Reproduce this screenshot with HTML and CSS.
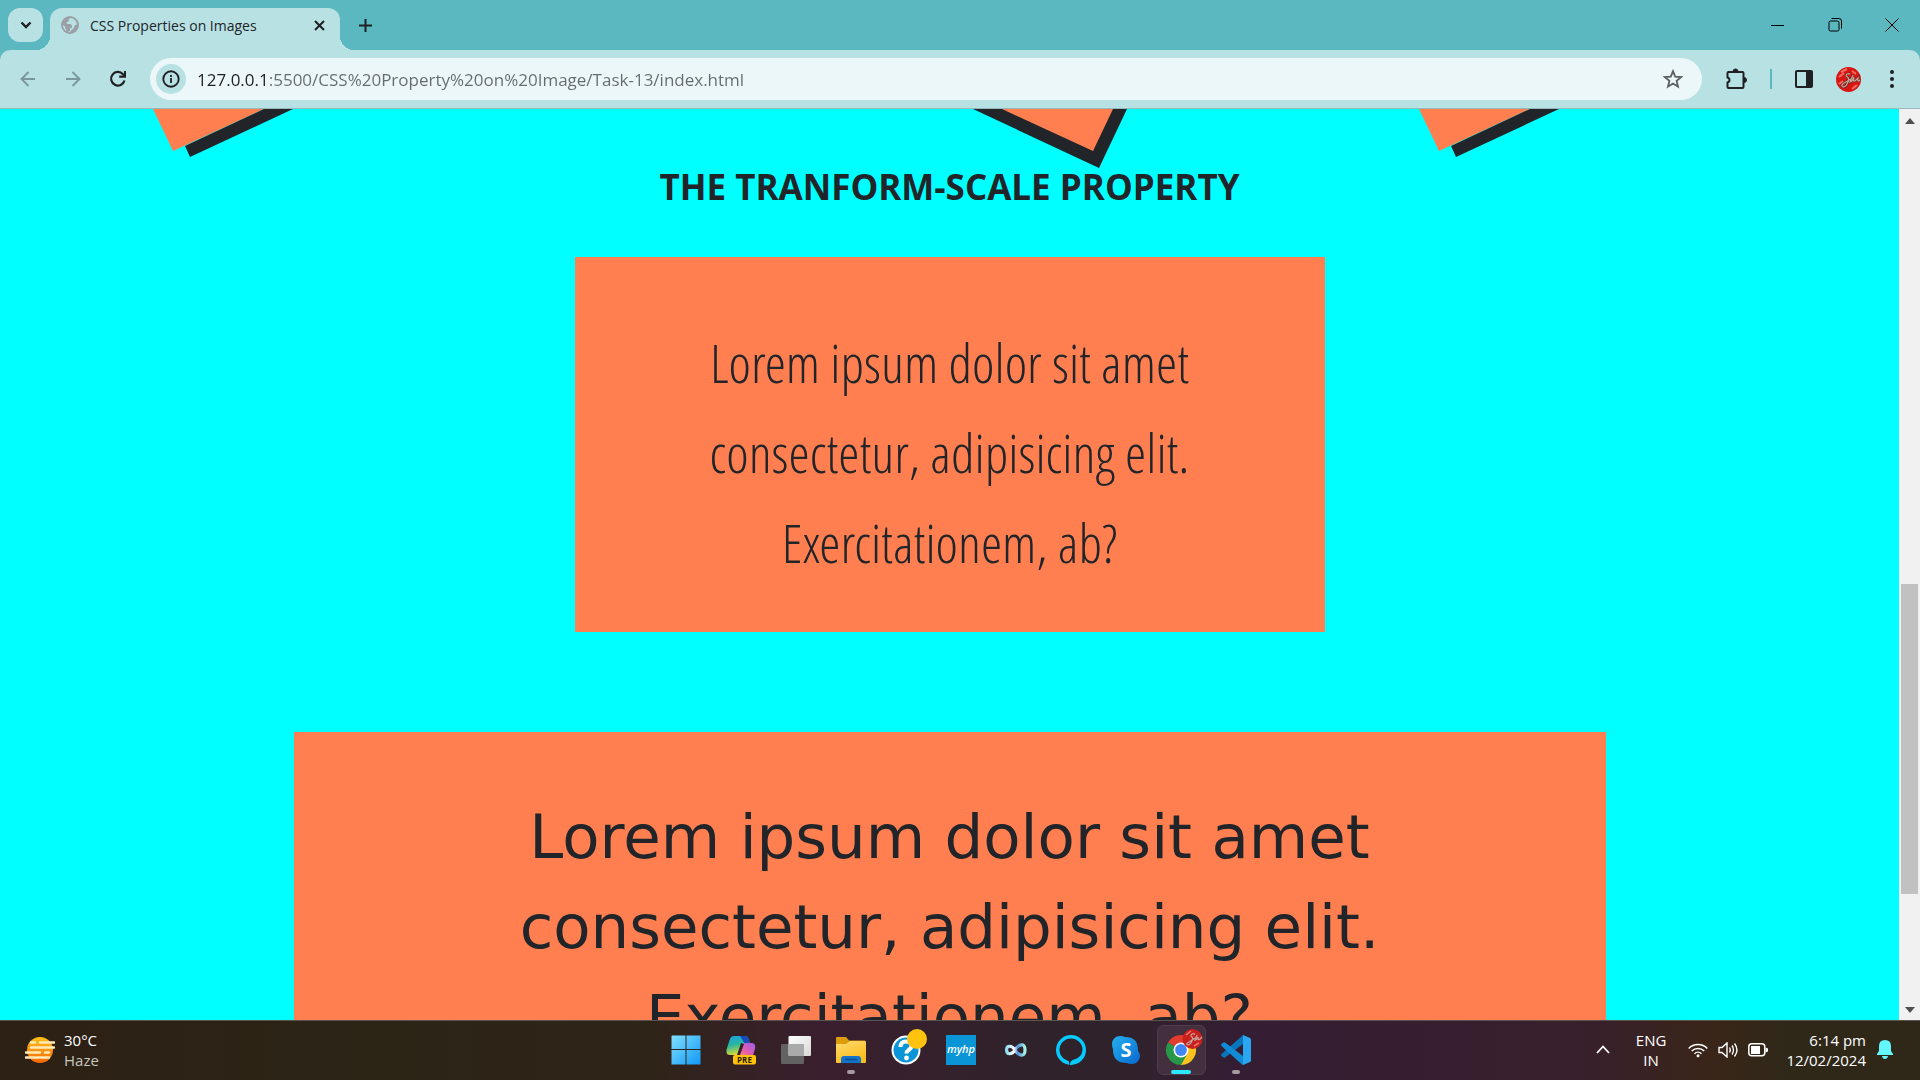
FILE: index.html
```html
<!DOCTYPE html>
<html lang="en">
<head>
<meta charset="utf-8">
<title>CSS Properties on Images</title>
<link rel="stylesheet" href="styles.css">
</head>
<body>
<header class="browser">
  <div class="tabstrip">
    <button class="tab-search" aria-label="Search tabs"><svg width="12" height="8" viewBox="0 0 12 8"><path d="M1.500 1.500 6 6l4.500-4.500" fill="none" stroke="#1f2023" stroke-width="2.400"/></svg></button>
    <div class="tab">
      <svg class="globe" width="18" height="18" viewBox="0 0 18 18"><circle cx="9" cy="9" r="9" fill="#9aa0a6"/><path d="M9.500 2 7.500 3.500 8 5 5.500 6.500 6 8h3.500l1.500 1.500v2l-2 1V15l-2.500.8L4.500 13 4 10.500 2 9c0 4 3 7 7 7l2-2.500 2-1.500 .5-2.500 2.500-1C15.500 5 13 2 9.500 2z" fill="#b8e1e4"/></svg>
      <span class="tab-title">CSS Properties on Images</span>
      <button class="tab-close" aria-label="Close tab"><svg width="11" height="11" viewBox="0 0 11 11"><path d="m1 1 9 9m0-9-9 9" stroke="#1f2023" stroke-width="2"/></svg></button>
    </div>
    <button class="new-tab" aria-label="New tab"><svg width="13" height="13" viewBox="0 0 13 13"><path d="M6.500 0v13M0 6.500h13" stroke="#1f2023" stroke-width="2"/></svg></button>
    <div class="window-buttons">
      <button aria-label="Minimize"><svg width="13" height="13" viewBox="0 0 13 13"><path d="M0 6.500h13" stroke="#000"/></svg></button>
      <button aria-label="Restore"><svg width="14" height="14" viewBox="0 0 14 14" fill="none" stroke="#000"><rect x="1" y="3" width="10" height="10" rx="1.500"/><path d="M3.500.5H11A2.500 2.500 0 0 1 13.500 3v7.500"/></svg></button>
      <button aria-label="Close"><svg width="14" height="14" viewBox="0 0 14 14"><path d="m.5.5 13 13m0-13-13 13" stroke="#000"/></svg></button>
    </div>
  </div>
  <div class="toolbar">
    <button class="nav" aria-label="Back"><svg width="16" height="16" viewBox="0 0 16 16"><path d="M15 8H2m6.500-7-7 7 7 7" fill="none" stroke="#7b979b" stroke-width="1.900"/></svg></button>
    <button class="nav" aria-label="Forward"><svg width="16" height="16" viewBox="0 0 16 16"><path d="M1 8h13M7.500 1l7 7-7 7" fill="none" stroke="#7b979b" stroke-width="1.900"/></svg></button>
    <button class="nav" aria-label="Reload"><svg width="18" height="18" viewBox="0 0 18 18"><path d="M15.500 10.500A6.800 6.800 0 1 1 14 4.200l1.500 1.500" fill="none" stroke="#1f2023" stroke-width="2.200"/><path d="M17 1v6.800h-6.800V5.600H15V1z" fill="#1f2023"/></svg></button>
    <div class="omnibox">
      <button class="site-info" aria-label="View site information"><svg width="18" height="18" viewBox="0 0 18 18"><circle cx="9" cy="9" r="7.700" fill="none" stroke="#1f2023" stroke-width="1.900"/><path d="M9 8v5M9 5v2" stroke="#1f2023" stroke-width="1.800"/></svg></button>
      <input class="address" type="text" aria-label="Address" value="127.0.0.1:5500/CSS%20Property%20on%20Image/Task-13/index.html">
      <button class="star" aria-label="Bookmark this tab"><svg width="20" height="20" viewBox="0 0 20 20"><path d="m10 2.200 2.200 5.400 5.900.5-4.500 3.800 1.400 5.800-5-3.100-5 3.100 1.400-5.800-4.500-3.800 5.900-.5z" fill="none" stroke="#5a5f61" stroke-width="1.800"/></svg></button>
    </div>
    <div class="actions">
      <button aria-label="Extensions"><svg width="22" height="22" viewBox="0 0 22 22"><path d="M3.500 4h14a1 1 0 0 1 1 1v14a1 1 0 0 1-1 1h-14a1 1 0 0 1-1-1v-4.500q2-.5 2-2.500t-2-2.500V5a1 1 0 0 1 1-1z" fill="none" stroke="#1f2023" stroke-width="2"/><path d="M8 3.500a2.500 2.500 0 0 1 5 0zM19 9.500a2.500 2.500 0 0 1 0 5z" fill="#1f2023" stroke="#1f2023"/></svg></button>
      <span class="divider"></span>
      <button aria-label="Side panel"><svg width="18" height="18" viewBox="0 0 18 18"><rect x="1" y="1" width="16" height="16" rx="1" fill="none" stroke="#1f2023" stroke-width="2"/><path d="M11 1h6v16h-6z" fill="#1f2023"/></svg></button>
      <button aria-label="Profile"><svg width="25" height="25" viewBox="0 0 25 25"><circle cx="12.500" cy="12.500" r="12.500" fill="#d91513"/><path d="m5 5 6-3M3 10l5-4m8-2 4 3m-4 15 5-4M3 17l4-3" stroke="#f06d62" stroke-width="2"/><path d="M14 7q-4-1-4 2 4 2 2 6-2 5-5 5-3-1 1-4l7-4m2-4-3 7q3-1 4-5-1 5 1 4l3-3q-1 5 2 2" fill="none" stroke="#5c2420" stroke-width="2.400"/><path d="M14 7q-4-1-4 2 4 2 2 6-2 5-5 5-3-1 1-4l7-4m2-4-3 7q3-1 4-5-1 5 1 4l3-3q-1 5 2 2" fill="none" stroke="#c9a295" stroke-width="1.300"/></svg></button>
      <button class="menu" aria-label="Menu"><svg width="4" height="18" viewBox="0 0 4 18" fill="#1f2023"><circle cx="2" cy="2" r="2"/><circle cx="2" cy="9" r="2"/><circle cx="2" cy="16" r="2"/></svg></button>
    </div>
  </div>
</header>

<div class="viewport">
  <main class="page">
    <div class="rotated">
      <svg width="354" height="60" viewBox="0 0 354 60"><path d="M13 0 33 42 124 0z" fill="#ff7f50"/><path d="m124 0-79 37 5 11L153 0z" fill="#212529"/></svg>
      <svg width="354" height="60" viewBox="0 0 354 60"><path d="m200 0 126 59 28-59z" fill="#212529"/><path d="m229 0 91 42 20-42z" fill="#ff7f50"/></svg>
      <svg width="354" height="60" viewBox="0 0 354 60"><path d="M13 0 33 42 124 0z" fill="#ff7f50"/><path d="m124 0-79 37 5 11L153 0z" fill="#212529"/></svg>
    </div>
    <h1 class="heading">THE TRANFORM-SCALE PROPERTY</h1>
    <p class="card tall">Lorem ipsum dolor sit amet<br>consectetur, adipisicing elit.<br>Exercitationem, ab?</p>
    <p class="card wide">Lorem ipsum dolor sit amet<br>consectetur, adipisicing elit.<br>Exercitationem, ab?</p>
  </main>
  <div class="scrollbar" aria-hidden="true">
    <svg width="10" height="6" viewBox="0 0 10 6"><path d="m5 0 5 6H0z" fill="#505050"/></svg>
    <div class="track"><div class="thumb"></div></div>
    <svg width="10" height="6" viewBox="0 0 10 6"><path d="m5 6 5-6H0z" fill="#505050"/></svg>
  </div>
</div>

<footer class="taskbar">
  <button class="weather">
    <svg width="30" height="26" viewBox="0 0 30 26"><defs><linearGradient id="sun" x2="0" y2="1"><stop stop-color="#ffc21a"/><stop offset="1" stop-color="#f4660a"/></linearGradient></defs><circle cx="15" cy="13" r="13" fill="url(#sun)"/><path d="M6 5.500h4m5 0h14M6 10.500h23M1 15.500h14m5 0h4M1 20.500h23" stroke="#ffeab5" stroke-width="2.600" stroke-linecap="round"/></svg>
    <span class="stack"><span>30°C</span><span class="dim">Haze</span></span>
  </button>
  <nav class="apps">
    <button class="app" aria-label="Start"><svg width="30" height="30" viewBox="0 0 30 30"><defs><linearGradient id="win" x2="1" y2="1"><stop stop-color="#80e0ff"/><stop offset="1" stop-color="#1198f5"/></linearGradient></defs><path d="M1 .5h13.500V14H.5V1zM15.500.5h14V14h-14zM.5 15h14v14.500H.5zM15.500 15h14v14.500h-14z" fill="url(#win)"/></svg></button>
    <button class="app" aria-label="Copilot"><svg width="30" height="30" viewBox="0 0 30 30"><defs><linearGradient id="cpa" x2=".3" y2="1"><stop stop-color="#1c9fe8"/><stop offset=".5" stop-color="#27b6a0"/><stop offset="1" stop-color="#d8da36"/></linearGradient><linearGradient id="cpb" x1="1" x2="0" y2="1"><stop stop-color="#9a5cf0"/><stop offset=".6" stop-color="#ee5fa4"/><stop offset="1" stop-color="#ffae58"/></linearGradient></defs><path d="M8 1h11q3 0 4 4l1 4h-5q-3 0-4 3l-3 8H4q-5 0-3-7L4 4q1-3 4-3z" fill="url(#cpa)"/><path d="M14 1h5q3 0 4 4l1 4h-5z" fill="#1849bd"/><path d="M20 8h6q4 0 3 6l-2 6-4 3H11l4-11q1-4 5-4z" fill="url(#cpb)"/><path d="m15 8 3 1-4 11h-3z" fill="#33222a"/><rect x="7" y="20" width="23" height="9.500" rx="2" fill="#ffc20a"/><text x="18.500" y="27.500" text-anchor="middle" class="badge-text">PRE</text></svg></button>
    <button class="app" aria-label="Task view"><svg width="30" height="30" viewBox="0 0 30 30"><defs><linearGradient id="tv" x2="1" y2="1"><stop stop-color="#fff"/><stop offset="1" stop-color="#d8d8d8"/></linearGradient></defs><rect x="0" y="9" width="23" height="20" rx="1" fill="#626262"/><rect x="7.500" y="1" width="22.500" height="20" rx="1" fill="url(#tv)"/><path d="M7.500 9H23v12H8.500a1 1 0 0 1-1-1z" fill="#aaa"/></svg></button>
    <button class="app open" aria-label="File Explorer"><svg width="30" height="30" viewBox="0 0 30 30"><defs><linearGradient id="fold" x2=".5" y2="1"><stop stop-color="#ffdb70"/><stop offset="1" stop-color="#f9bd1c"/></linearGradient></defs><path d="M0 10V3q0-1 1-1h9l3 3.500h16L28 10z" fill="#dd9c0b"/><path d="M0 9h10l4-3h15q1 0 1 1v20q0 1-1 1H1q-1 0-1-1z" fill="url(#fold)"/><path d="M5 28v-4q0-3 3-3h14q3 0 3 3v4z" fill="#1273c8"/><path d="M9 24.500h12" stroke="#0c4c91" stroke-width="1.500"/></svg></button>
    <button class="app" aria-label="HP Support Assistant"><svg width="44" height="42" viewBox="-10 0 44 42"><circle cx="12" cy="21" r="14.500" fill="#fff"/><circle cx="12" cy="21" r="12.500" fill="#0a96d6"/><path d="M6.500 18q0-5.500 5.500-5.500t5.500 4.500c0 4-5 3.500-5 7.500" fill="none" stroke="#fff" stroke-width="4"/><circle cx="12.500" cy="29" r="2.400" fill="#fff"/><circle cx="23" cy="10" r="10" fill="#ffc20e"/></svg></button>
    <button class="app" aria-label="myHP"><span class="myhp">myhp</span></button>
    <button class="app" aria-label="Infinity"><svg width="24" height="18" viewBox="0 0 24 18"><defs><linearGradient id="inf"><stop stop-color="#90d9ee"/><stop offset=".4" stop-color="#fff"/><stop offset=".6" stop-color="#4d91dc"/><stop offset="1" stop-color="#a9f4e4"/></linearGradient></defs><path d="M11 9C8 14 2.500 14 2.500 9S8 4 11 9s10 8.500 10 0S14 4 11 9z" fill="none" stroke="url(#inf)" stroke-width="3.200"/></svg></button>
    <button class="app" aria-label="Alexa"><svg width="30" height="30" viewBox="0 0 30 30"><path fill-rule="evenodd" d="M15 0a15 15 0 1 1 0 30A15 15 0 0 1 15 0zm0 3.500A11.500 11.500 0 0 0 3.500 15c0 5 3.500 9 8.500 10.800q1.200.5 1.200 1.700V30h.8c0-3 1-4.500 4-5.500A11 11 0 0 0 26.500 15 11.500 11.500 0 0 0 15 3.500z" fill="#05caff"/></svg></button>
    <button class="app" aria-label="Skype"><svg width="28" height="28" viewBox="0 0 28 28"><defs><linearGradient id="sky" x2="1" y2="1"><stop stop-color="#25b2ef"/><stop offset="1" stop-color="#0768cd"/></linearGradient></defs><path d="M8 0q3 0 5 1 13 0 13 13v1q2 2 2 5a8 8 0 0 1-8 8q-3 0-5-1Q1 27 1 14v-1Q0 11 0 8a8 8 0 0 1 8-8z" fill="url(#sky)"/><text x="14" y="21" text-anchor="middle" class="skype-text">S</text></svg></button>
    <button class="app active" aria-label="Google Chrome"><svg width="44" height="43" viewBox="-7 0 44 43"><path d="M15 22 2 14.500A15 15 0 0 1 28 14.500z" fill="#e33b2e"/><path d="M15 22 28 14.500A15 15 0 0 1 15 37z" fill="#fcc31e"/><path d="M15 22v15A15 15 0 0 1 2 14.500z" fill="#279847"/><path d="m21.500 25.700-6.500 11.300-3-7z" fill="#279847"/><circle cx="15" cy="22" r="7.500" fill="#fff"/><circle cx="15" cy="22" r="5.900" fill="#4285f4"/><circle cx="26.500" cy="11" r="10" fill="#c9201e"/><path d="m20 7 5-4m3 15 5-3" stroke="#ec7469" stroke-width="1.500"/><path d="M29 6q-4-1-4 2 3 2 1 5-2 4-4 4-3-1 1-3l6-4m2-3-2 5q2 0 3-3 0 4 2 2l2-2" fill="none" stroke="#c2a29a" stroke-width="1.300"/></svg></button>
    <button class="app open" aria-label="Visual Studio Code"><svg width="30" height="30" viewBox="0 0 30 30"><path d="m22 0 7 3q1 .5 1 1.500v21q0 1-1 1.500l-7 3z" fill="#2aa7f0"/><path d="m22 0v9L4 22.500q-1 .5-2-.3L.5 21q-1-1 0-2L21 1z" fill="#0876bd"/><path d="M22 30v-9L4 7.500q-1-.5-2 .3L.5 9q-1 1 0 2L21 29.500z" fill="#108bd6"/></svg></button>
  </nav>
  <div class="tray">
    <button class="chevron" aria-label="Show hidden icons"><svg width="14" height="9" viewBox="0 0 14 9"><path d="m1 8 6-6.500L13 8" fill="none" stroke="#fff" stroke-width="1.800"/></svg></button>
    <button class="lang"><span>ENG</span><span>IN</span></button>
    <button class="status" aria-label="Network, volume and battery">
      <svg width="20" height="16" viewBox="0 0 20 16" fill="none" stroke="#fff" stroke-width="1.500"><path d="M.7 6.500a13 13 0 0 1 18.600 0M3.700 9a9 9 0 0 1 12.600 0M6.500 11.700a5 5 0 0 1 7 0"/><circle cx="10" cy="13.700" r="1.500" fill="#fff" stroke="none"/></svg>
      <svg width="20" height="16" viewBox="0 0 20 16" fill="none" stroke="#fff" stroke-width="1.400"><path d="M1 5.500h3L9 1v14l-5-4.500H1zM11.500 5.500q1.500 2.500 0 5M14 3.500q3 4.500 0 9M16.500 1.500q5 6.500 0 13"/></svg>
      <svg width="20" height="14" viewBox="0 0 20 14"><rect x=".8" y=".8" width="16" height="12" rx="3" fill="none" stroke="#fff" stroke-width="1.500"/><path d="M3 3h9v8H3zM17.500 4.500l2.500 1v3l-2.500 1z" fill="#fff"/></svg>
    </button>
    <button class="clock"><span>6:14 pm</span><span>12/02/2024</span></button>
    <button class="bell" aria-label="Notifications"><svg width="16" height="19" viewBox="0 0 16 19"><path d="M8 0q6 0 6 6v5l2 3v1H0v-1l2-3V6q0-6 6-6zM5 16h6q-.5 3-3 3t-3-3z" fill="#63f6fb"/></svg></button>
  </div>
</footer>
</body>
</html>
```
FILE: styles.css
```css
* { box-sizing: border-box; }
body {
  margin: 0;
  height: 100vh;
  display: flex;
  flex-direction: column;
  overflow: hidden;
  font-family: "Open Sans", "Noto Sans", sans-serif;
  color: #212529;
}
button {
  border: 0;
  padding: 0;
  background: none;
  font: inherit;
  color: inherit;
  display: flex;
  align-items: center;
  justify-content: center;
}
svg { display: block; flex: none; }

.browser { background: #5bb7c0; flex: none; }
.tabstrip { display: flex; height: 50px; padding: 8px 0 0 8px; }
.tab-search {
  width: 35px;
  height: 34px;
  border-radius: 12px;
  background: #b8e1e4;
}
.tab {
  position: relative;
  display: flex;
  align-items: center;
  width: 290px;
  height: 42px;
  margin-left: 7px;
  padding: 0 12px 8px 11px;
  border-radius: 12px 12px 0 0;
  background: #b8e1e4;
}
.tab::before, .tab::after {
  content: "";
  position: absolute;
  bottom: 0;
  width: 14px;
  height: 14px;
}
.tab::before { right: 100%; background: radial-gradient(circle at 0 0, transparent 14px, #b8e1e4 14px); }
.tab::after { left: 100%; background: radial-gradient(circle at 100% 0, transparent 14px, #b8e1e4 14px); }
.tab-title { flex: 1; margin-left: 11px; font-size: 14px; white-space: nowrap; }
.tab-close { width: 18px; height: 24px; }
.new-tab { width: 50px; height: 34px; }
.window-buttons { display: flex; margin-left: auto; }
.window-buttons button { width: 57px; height: 34px; }

.toolbar {
  display: flex;
  align-items: center;
  height: 59px;
  padding: 0 26px 0 6px;
  border-bottom: 1px solid #98b9bc;
  border-radius: 10px 10px 0 0;
  background: #b8e1e4;
}
.nav { width: 44px; height: 40px; margin-right: 1px; }
.omnibox {
  display: flex;
  flex: 1;
  align-items: center;
  height: 42px;
  margin-left: 9px;
  padding: 0 19px 0 6px;
  border-radius: 21px;
  background: #ebf7f8;
}
.site-info { width: 30px; height: 30px; border-radius: 50%; background: #b8e1e4; }
.address {
  flex: 1;
  min-width: 0;
  height: 40px;
  margin-left: 11px;
  padding: 0;
  border: 0;
  outline: 0;
  font-family: "Open Sans", "Noto Sans", sans-serif;
  font-size: 17px;
  color: transparent;
  background: linear-gradient(90deg, #1f2023 72px, #646c6e 72px);
  -webkit-background-clip: text;
  background-clip: text;
}
.actions { display: flex; align-items: center; gap: 23px; margin-left: 23px; }
.divider { width: 2px; height: 20px; background: #5bb7c0; }
.menu { margin-left: 6px; }

.viewport { display: flex; flex: 1; min-height: 0; }
.page { flex: 1; min-width: 0; overflow: hidden; background: #0ff; }
.rotated { display: grid; grid-template-columns: repeat(3, 1fr); justify-items: center; }
.heading { margin: 0 0 52px; font-size: 35px; line-height: 36px; font-weight: 700; text-align: center; }
.card {
  max-width: 100%;
  height: 375px;
  margin: 0 auto 100px;
  padding-top: 60px;
  background: #ff7f50;
  text-align: center;
  line-height: 90px;
}
.tall { width: 750px; font-family: "Open Sans Condensed Light", "Open Sans Condensed", "Open Sans", sans-serif; font-weight: 300; font-size: 54px; }
.wide { width: 1312px; font-family: "DejaVu Sans", sans-serif; font-size: 61px; }

.scrollbar {
  display: flex;
  flex-direction: column;
  align-items: center;
  width: 21px;
  padding: 9px 0 7px;
  background: #f1f1f1;
}
.track { display: flex; flex-direction: column; flex: 1; width: 17px; }
.track::before { content: ""; flex: 460; }
.thumb { flex: 310; background: #c1c1c1; }
.track::after { content: ""; flex: 113; }

.taskbar {
  display: grid;
  grid-template-columns: 1fr auto 1fr;
  align-items: center;
  flex: none;
  height: 60px;
  padding-bottom: 2px;
  border-top: 1px solid #5a5350;
  background: linear-gradient(90deg, #2d2015, #2c2516 20%, #2f2418 34%, #3a1f2f 43%, #30222a 53%, #30222b 58%, #351d34 65%, #38202b 83%, #3a2519 89%, #2f2818 93%, #2f2718);
  color: #fff;
  font-size: 15px;
  line-height: 20px;
}
.weather { justify-self: start; margin-left: 25px; gap: 9px; text-align: left; }
.stack, .clock, .lang { display: flex; flex-direction: column; }
.dim { color: #c9c5bf; }
.apps { display: flex; padding-left: 2px; }
.app {
  position: relative;
  width: 49px;
  height: 50px;
  margin: 0 3px;
  border-radius: 6px;
}
.active { background: #432f3e; border: 1px solid #4e3c48; }
.open::after, .active::after {
  content: "";
  position: absolute;
  bottom: 1px;
  width: 8px;
  height: 4px;
  border-radius: 2px;
  background: #a39aa0;
}
.active::after { bottom: 0; width: 20px; background: #2be9fc; }
.badge-text { font: 700 8px "Open Sans", sans-serif; fill: #2a1d00; }
.skype-text { font: 700 20px "Open Sans", sans-serif; fill: #fff; }
.myhp {
  width: 30px;
  height: 30px;
  background: #0a96d6;
  font-size: 11px;
  font-weight: 600;
  font-style: italic;
  line-height: 28px;
}
.tray { display: flex; align-items: center; justify-self: end; padding-right: 27px; }
.lang { margin-left: 26px; }
.status { gap: 10px; margin-left: 22px; }
.clock { align-items: flex-end; margin-left: 18px; }
.bell { margin-left: 11px; }
```
